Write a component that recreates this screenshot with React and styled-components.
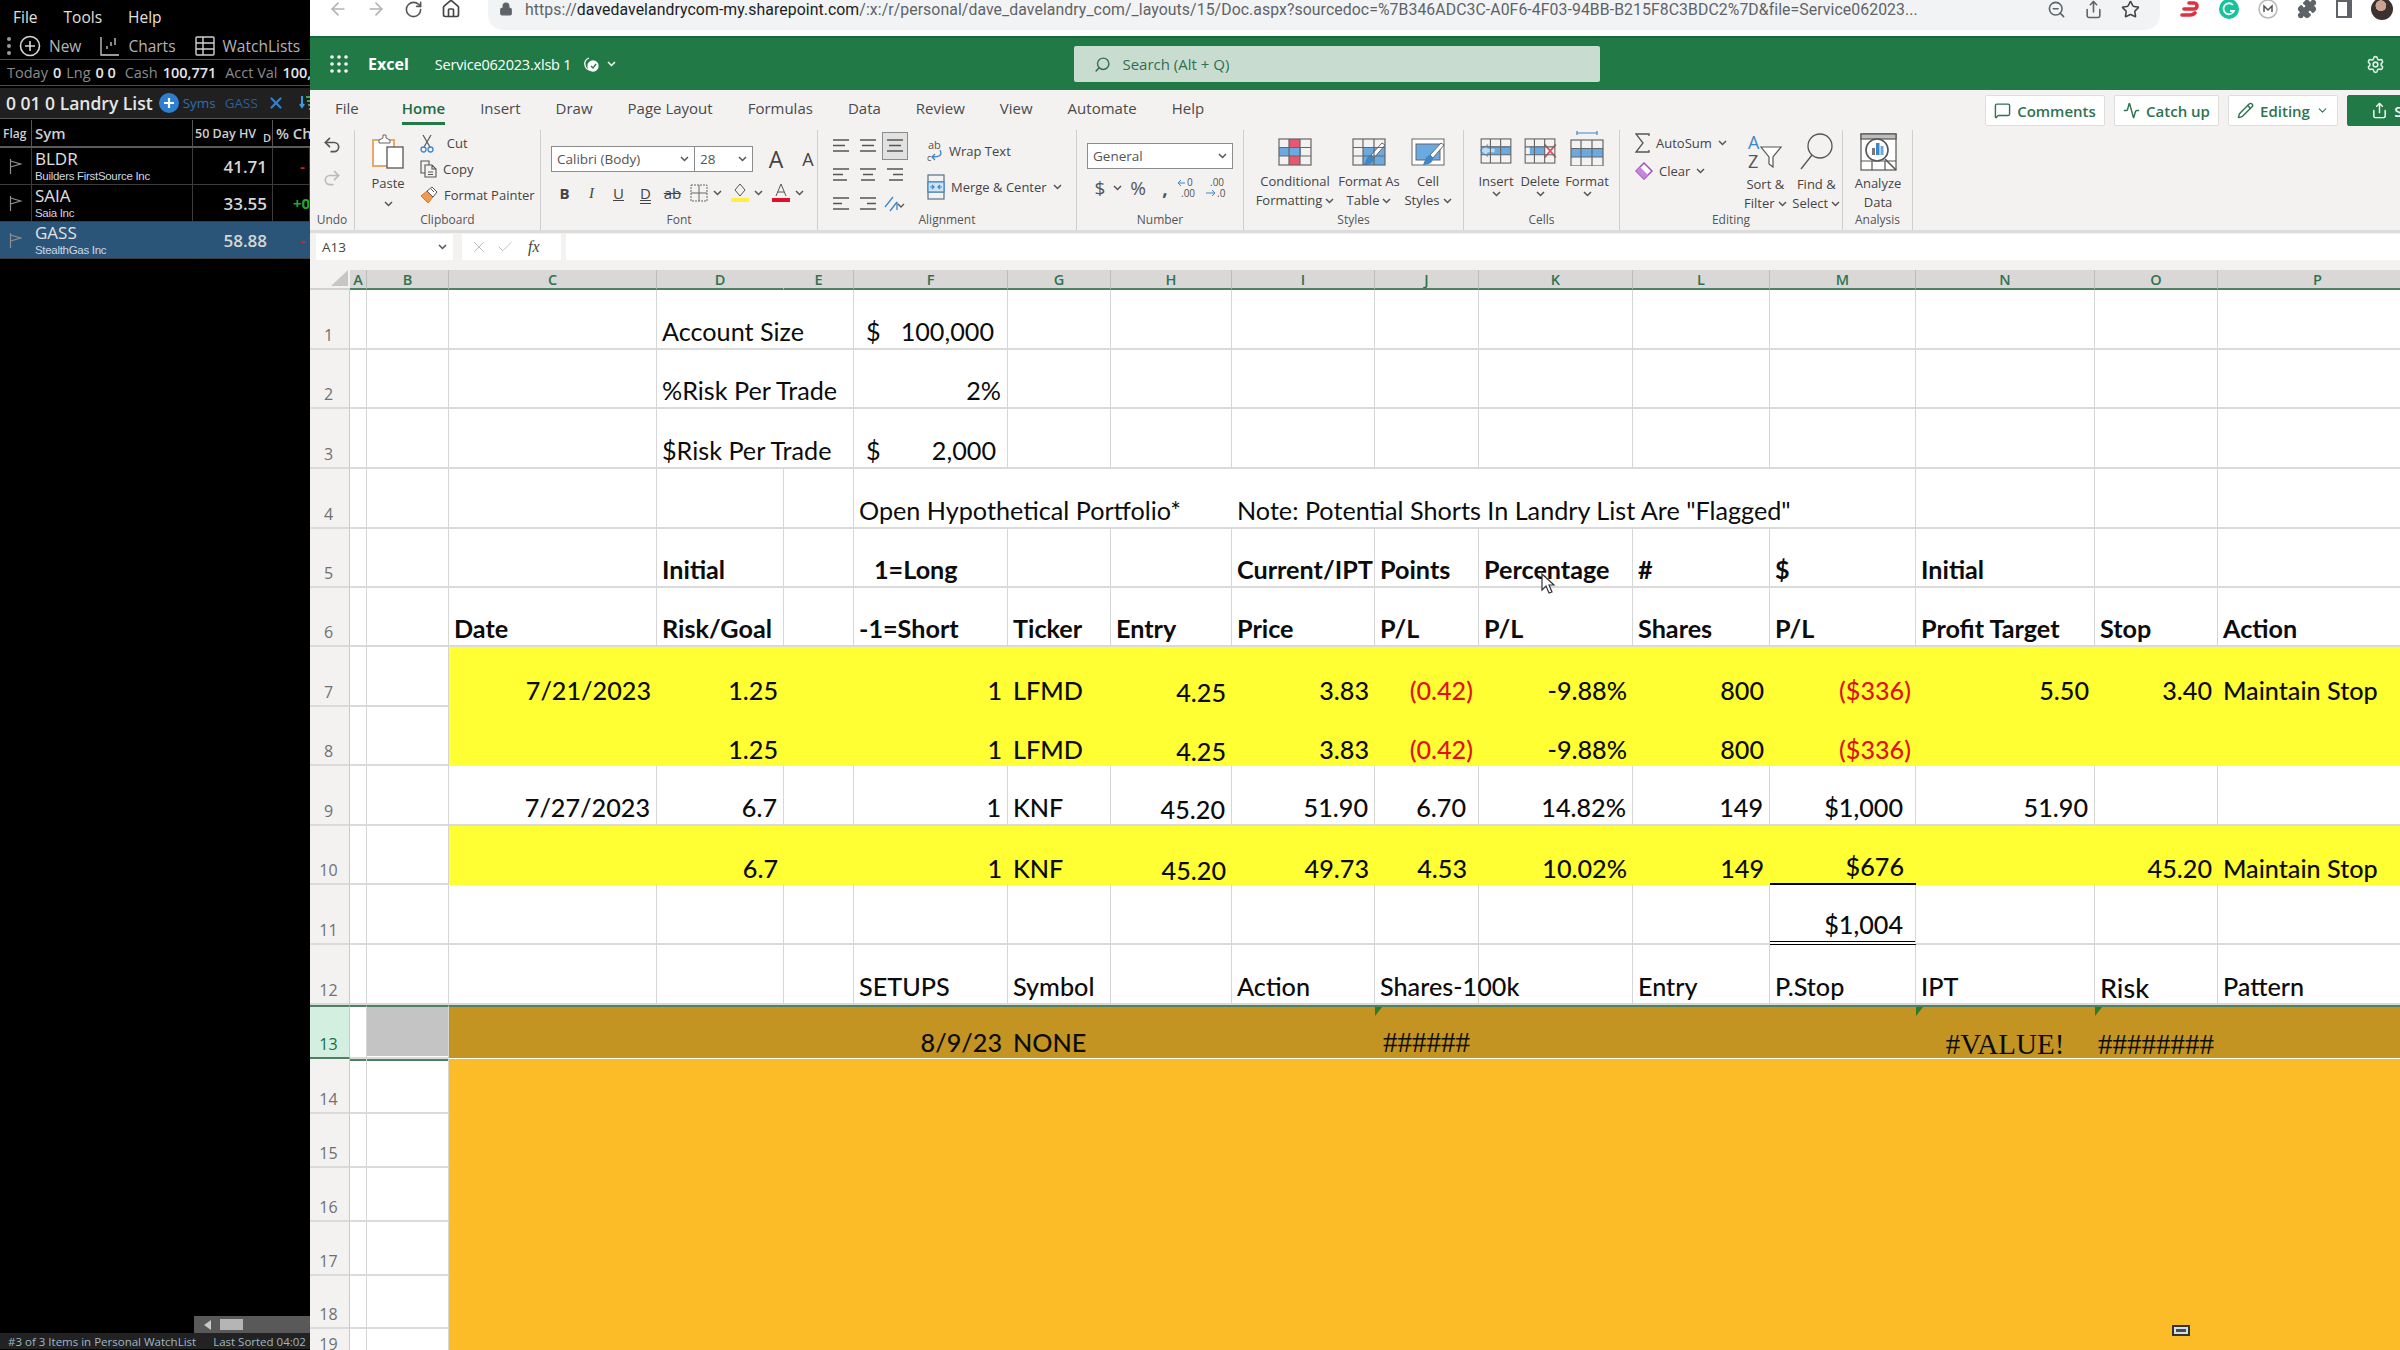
import React from "react";
import styled, { createGlobalStyle } from "styled-components";
import {
  ArrowLeft, ArrowRight, RotateCw, Home, Lock, ZoomOut, Share, Star, Puzzle, Settings,
  Search, MessageSquare, Activity, Pencil, ChevronDown, Undo2, Redo2, X, Check, Plus,
} from "lucide-react";

const UI = '"Open Sans", "Noto Sans", sans-serif';
const SHEET = 'Lato, "Open Sans", sans-serif';
const GREEN = "#217a46";

const Global = createGlobalStyle`
  html, body { margin: 0; padding: 0; width: 2400px; height: 1350px; overflow: hidden; background: #000; }
  * { box-sizing: border-box; }
  svg { display: block; flex: none; }
`;

const Page = styled.div`
  display: flex;
  width: 2400px;
  height: 1350px;
  overflow: hidden;
  position: relative;
  font-family: ${UI};
`;

/* ---------- trading panel ---------- */
const Side = styled.aside`
  width: 310px;
  flex: none;
  background: #000;
  color: #d8d8d8;
  display: flex;
  flex-direction: column;
  overflow: hidden;
  white-space: nowrap;
`;
const MenuBar = styled.div`
  height: 33px;
  display: flex;
  align-items: center;
  gap: 26px;
  padding-left: 13px;
  font-size: 15.5px;
  color: #e2e2d8;
`;
const ToolBar = styled.div`
  height: 27px;
  display: flex;
  align-items: center;
  padding-left: 6px;
  font-size: 15.5px;
  color: #b4b4b4;
  border-bottom: 1px solid #4c4c4c;
`;
const ToolLabel = styled.span`
  margin: 0 ${(p) => p.$right ?? 10}px 0 ${(p) => p.$left ?? 8}px;
`;
const ToolSep = styled.i`
  width: 1px;
  height: 16px;
  background: #888;
  margin-right: 9px;
`;
const Balance = styled.div`
  height: 26px;
  display: flex;
  align-items: center;
  padding-left: 7px;
  gap: 5px;
  font-size: 14.5px;
  color: #8b8b8b;
  border-bottom: 1px solid #4c4c4c;
  b { color: #e6e6e6; font-weight: 600; }
`;
const ListTitle = styled.div`
  height: 31px;
  margin: 2px 0 1px;
  padding-left: 6px;
  display: flex;
  align-items: center;
  background: #202020;
  border-bottom: 1px solid #555;
  font-size: 17.5px;
  font-weight: 600;
  color: #e6e6e6;
`;
const BlueText = styled.span`
  font-size: 13.5px;
  font-weight: 400;
  color: ${(p) => p.$c || "#2f6fb0"};
  margin-left: ${(p) => p.$m || 0}px;
`;
const WatchGrid = styled.div`
  display: grid;
  grid-template-columns: 32px 161px 80px 37px;
  grid-template-rows: 28px 37px 37px 37px;
`;
const HeadCell = styled.div`
  display: flex;
  align-items: center;
  padding-left: ${(p) => p.$pad ?? 3}px;
  font-size: ${(p) => p.$size || 14}px;
  font-weight: 600;
  color: #cfcfcf;
  border-right: 1px solid #555;
  border-bottom: 2px solid #5a5a5a;
  overflow: hidden;
  sub { font-size: 11px; margin: 8px 0 0 7px; }
`;
const WatchCell = styled.div`
  background: ${(p) => (p.$active ? "#2b5578" : "#000")};
  border-right: 1px solid ${(p) => (p.$active ? "#2b5578" : "#3c3c3c")};
  border-bottom: 1px solid #3c3c3c;
  display: flex;
  align-items: center;
  justify-content: ${(p) => p.$justify || "flex-start"};
  overflow: hidden;
`;
const SymBox = styled.div`
  padding-left: 3px;
  line-height: 1;
  span { display: block; font-size: 17px; color: #e2e2e2; }
  small { display: block; margin-top: 3px; font: 11.5px "Liberation Sans", sans-serif; letter-spacing: -0.3px; color: #cbd8e4; }
`;
const Num = styled.span`
  font-size: 17px;
  font-weight: 600;
  color: #d6d6d6;
  padding-right: 5px;
`;
const Change = styled.span`
  font-size: 15px;
  font-weight: 700;
  color: ${(p) => p.$c};
  margin-left: ${(p) => p.$m}px;
`;
const SideFill = styled.div`
  flex: 1;
`;
const HScroll = styled.div`
  height: 17px;
  margin-left: 194px;
  background: #595959;
  display: flex;
  align-items: center;
  padding-left: 10px;
  gap: 9px;
`;
const ScrollArrow = styled.i`
  border: 5px solid transparent;
  border-right: 7px solid #c8c8c8;
  border-left: 0;
`;
const ScrollThumb = styled.i`
  width: 23px;
  height: 11px;
  background: #b5b5b5;
`;
const StatusBar = styled.div`
  height: 16px;
  margin-bottom: 1px;
  background: #222;
  display: flex;
  align-items: center;
  padding-left: 8px;
  gap: 17px;
  font-size: 11.5px;
  color: #9fb6c4;
`;

/* ---------- browser chrome ---------- */
const Main = styled.main`
  flex: 1;
  min-width: 0;
  display: flex;
  flex-direction: column;
  background: #fff;
`;
const BrowserBar = styled.div`
  height: 36px;
  flex: none;
  display: flex;
  background: #fff;
  padding-left: 18px;
  color: #5f6368;
`;
const NavIcons = styled.div`
  height: 18px;
  width: 160px;
  display: flex;
  align-items: center;
  gap: 18px;
`;
const Omnibox = styled.div`
  width: 1672px;
  height: 30px;
  padding: 0 10px 12px 11px;
  border-radius: 0 0 15px 15px;
  background: #f1f3f4;
  display: flex;
  align-items: center;
  gap: 12px;
`;
const Url = styled.div`
  flex: 1;
  width: 0;
  font: 15.8px Roboto, sans-serif;
  color: #5f6368;
  white-space: nowrap;
  overflow: hidden;
  letter-spacing: 0.08px;
  b { font-weight: 400; color: #202124; }
`;
const OmniIcons = styled.div`
  display: flex;
  align-items: center;
  gap: 18px;
  padding-right: 10px;
`;
const ExtIcons = styled.div`
  height: 18px;
  display: flex;
  align-items: center;
  gap: 19px;
  padding-left: 20px;
`;
const Avatar = styled.i`
  width: 22px;
  height: 22px;
  border-radius: 50%;
  background: radial-gradient(circle at 45% 35%, #c9a38e 0 28%, #3b3230 30%);
`;

/* ---------- excel title bar ---------- */
const TitleBar = styled.header`
  height: 54px;
  flex: none;
  background: ${GREEN};
  border-top: 2px solid #156a3a;
  color: #fff;
  display: flex;
  align-items: center;
  padding-left: 20px;
`;
const AppName = styled.strong`
  margin: 0 26px 0 20px;
  font-size: 16px;
`;
const FileName = styled.span`
  font-size: 14.5px;
  letter-spacing: -0.2px;
  margin-right: 12px;
`;
const SearchBox = styled.div`
  width: 526px;
  height: 36px;
  margin-left: 458px;
  background: #c8ddd0;
  border-radius: 2px;
  display: flex;
  align-items: center;
  gap: 11px;
  padding-left: 20px;
  color: #2f6f50;
  font-size: 15px;
`;
const TitleEnd = styled.div`
  flex: 1;
  display: flex;
  justify-content: flex-end;
  padding-right: 15px;
`;

/* ---------- ribbon ---------- */
const Ribbon = styled.section`
  height: 143px;
  flex: none;
  background: #f3f2f1;
  color: #444;
  border-bottom: 3px solid #dcdcdc;
  font-size: 13px;
  white-space: nowrap;
`;
const TabRow = styled.nav`
  height: 40px;
  display: flex;
  align-items: flex-start;
  padding: 5px 0 0 25px;
  gap: 35px;
  font-size: 15px;
  color: #4a4a4a;
`;
const Tab = styled.span`
  height: 30px;
  line-height: 26px;
  margin-right: ${(p) => p.$gap || 0}px;
  color: ${(p) => (p.$on ? "#1e6b42" : "inherit")};
  font-weight: ${(p) => (p.$on ? 600 : 400)};
  border-bottom: ${(p) => (p.$on ? `3px solid ${GREEN}` : "0")};
`;
const TabActions = styled.div`
  margin-left: auto;
  display: flex;
  gap: 9px;
  margin-right: -60px;
`;
const ActionBtn = styled.span`
  width: ${(p) => p.$w}px;
  height: 31px;
  display: flex;
  align-items: center;
  justify-content: center;
  gap: 6px;
  font-size: 15px;
  font-weight: 600;
  border-radius: 2px;
  border: 1px solid ${(p) => (p.$solid ? GREEN : "#dedede")};
  background: ${(p) => (p.$solid ? GREEN : "#fff")};
  color: ${(p) => (p.$solid ? "#fff" : "#2e7350")};
`;
const Groups = styled.div`
  display: flex;
  height: 100px;
`;
const Group = styled.div`
  width: ${(p) => p.$w}px;
  flex: none;
  display: flex;
  flex-direction: column;
  border-right: 1px solid #cfcfcf;
`;
const GroupBody = styled.div`
  flex: 1;
  display: flex;
  padding-left: ${(p) => p.$pad || 0}px;
  min-height: 0;
`;
const GroupName = styled.div`
  height: 19px;
  text-align: center;
  font-size: 12px;
  color: #555;
`;
const BigBtn = styled.div`
  width: ${(p) => p.$w}px;
  flex: none;
  display: flex;
  flex-direction: column;
  align-items: center;
  padding-top: ${(p) => p.$top ?? 8}px;
  line-height: 19px;
  svg + span { margin-top: ${(p) => p.$gap ?? 6}px; }
`;
const CaretLine = styled.span`
  display: flex;
  align-items: center;
  gap: 3px;
`;
const SmallStack = styled.div`
  display: flex;
  flex-direction: column;
  gap: 6px;
  padding: ${(p) => p.$top ?? 3}px 0 0 ${(p) => p.$left ?? 0}px;
`;
const SmallBtn = styled.div`
  display: flex;
  align-items: center;
  height: 20px;
  gap: 6px;
`;
const ComboRow = styled.div`
  display: flex;
  align-items: center;
  gap: ${(p) => p.$gap ?? 0}px;
`;
const Combo = styled.div`
  height: 26px;
  background: #fff;
  border: 1px solid #8c8c8c;
  display: flex;
  align-items: center;
  font-size: 13.5px;
  color: #555;
`;
const ComboPart = styled.div`
  width: ${(p) => p.$w}px;
  height: 100%;
  display: flex;
  align-items: center;
  justify-content: space-between;
  padding: 0 5px;
  border-left: ${(p) => (p.$split ? "1px solid #8c8c8c" : "0")};
`;
const StackCol = styled.div`
  display: flex;
  flex-direction: column;
  padding: ${(p) => p.$top}px 0 0 ${(p) => p.$left}px;
  gap: ${(p) => p.$gap}px;
`;
const FontBtn = styled.span`
  width: ${(p) => p.$w || 26}px;
  display: flex;
  justify-content: center;
  align-items: center;
  font-size: 15px;
  font-family: "Liberation Serif", serif;
  color: #444;
`;
const AlignGrid = styled.div`
  display: grid;
  grid-template-columns: repeat(3, 27px);
  grid-template-rows: 28px 29px 29px;
  margin: 2px 0 0 9px;
  justify-items: center;
  align-items: center;
`;
const AlignCell = styled.div`
  width: 26px;
  height: 28px;
  display: flex;
  align-items: center;
  justify-content: center;
  background: ${(p) => (p.$on ? "#e1e1e1" : "transparent")};
  border: 1px solid ${(p) => (p.$on ? "#8c8c8c" : "transparent")};
`;
const NumGlyph = styled.span`
  font-size: 19px;
  color: #555;
  width: ${(p) => p.$w}px;
  text-align: center;
`;

/* ---------- formula bar ---------- */
const FormulaBar = styled.div`
  height: 37px;
  flex: none;
  display: flex;
  gap: 5px;
  background: #f3f2f1;
  padding: 1px 0 10px 6px;
`;
const NameBox = styled.div`
  width: 137px;
  background: #fff;
  display: flex;
  align-items: center;
  justify-content: space-between;
  padding: 0 6px;
  font-size: 13.5px;
  color: #444;
  margin-right: 4px;
`;
const FxBox = styled.div`
  width: 99px;
  background: #fff;
  display: flex;
  align-items: center;
  gap: 8px;
  padding-left: 8px;
  color: #bdbdbd;
  i { font: italic 16px "Liberation Serif", serif; color: #444; margin-left: 6px; }
`;
const FormulaInput = styled.div`
  flex: 1;
  background: #fff;
`;

/* ---------- sheet ---------- */
const Sheet = styled.div`
  flex: 1;
  min-height: 0;
  overflow: hidden;
  display: grid;
  grid-template-columns: 40px 17px 82px 208px 127px 70px 154px 103px 121px 143px 104px 154px 137px 146px 179px 123px 200px;
  grid-template-rows: 20px 60px 59px 60px 60px 59px 59px 60px 59px 60px 59px 60px 60px 54px 55px 54px 54px 54px 53px 30px;
  background: #fff;
  font-family: ${SHEET};
`;
const Corner = styled.div`
  background: #f3f2f1;
  border-bottom: 2px solid #d0d0d0;
  display: flex;
  align-items: flex-end;
  justify-content: flex-end;
  padding: 0 2px 2px 0;
`;
const ColHead = styled.div`
  background: #d9d8d7;
  border-right: 1px solid ${(p) => (p.$merge ? "transparent" : "#bcbcbc")};
  border-bottom: 2px solid #4e8263;
  display: flex;
  align-items: center;
  justify-content: ${(p) => (p.$shift ? "flex-end" : "center")};
  padding-right: ${(p) => (p.$shift ? 5 : 0)}px;
  font: 600 14.5px ${UI};
  color: #2e7350;
`;
const RowHead = styled.div`
  background: ${(p) => (p.$on ? "#d2efe0" : "#f3f2f1")};
  border-right: 1px solid #c9c9c9;
  border-bottom: 2px solid ${(p) => (p.$on ? "#4e8263" : "#dadada")};
  border-top: ${(p) => (p.$on ? "2px solid #4e8263" : "0")};
  color: ${(p) => (p.$on ? "#1e6b42" : "#707070")};
  font: 400 16px ${UI};
  display: flex;
  align-items: flex-end;
  justify-content: center;
  padding-bottom: 2px;
  padding-right: 2px;
`;
const justify = { right: "flex-end", center: "center", left: "flex-start", between: "space-between" };
const Cell = styled.div`
  position: relative;
  min-width: 0;
  display: flex;
  align-items: flex-end;
  justify-content: ${(p) => justify[p.$align || "left"]};
  white-space: nowrap;
  padding: 0 ${(p) => p.$padR ?? 6}px ${(p) => p.$drop ?? 2}px ${(p) => p.$padL ?? 5}px;
  font-family: ${(p) => (p.$serif ? '"Liberation Serif", serif' : "inherit")};
  font-size: ${(p) => p.$size || 25.2}px;
  line-height: 30px;
  font-weight: ${(p) => p.$weight || 400};
  color: ${(p) => (p.$red ? "#e01313" : "#0c0c0c")};
  background: ${(p) => p.$fill || "transparent"};
  border-right: ${(p) => (p.$noLine ? "0" : "1px solid #d6d6d6")};
  border-bottom: ${(p) => p.$rule || (p.$noLine ? "0" : "2px solid #dadada")};
  border-top: ${(p) => (p.$selected ? "2px solid #4e8263" : "0")};
  box-shadow: ${(p) => (p.$selected ? "inset 0 -1px 0 #fff, 0 2px 0 #4e8263" : "none")};
`;
const Tick = styled.i`
  position: absolute;
  top: 0;
  left: 0;
  border-style: solid;
  border-width: 9px 7px 0 0;
  border-color: #2b7a2f transparent transparent transparent;
`;
const Cursor = styled.svg`
  position: absolute;
  left: 1541px;
  top: 573px;
`;
const PageBadge = styled.div`
  position: absolute;
  left: 2172px;
  top: 1325px;
  width: 18px;
  height: 11px;
  background: #4a4a4a;
  border: 2px solid #333;
  box-shadow: inset 0 0 0 2px #cfe0ea;
`;

/* ---------- drawn icons ---------- */
const Caret = ({ c = "#555" }) => (
  <svg width="9" height="6" viewBox="0 0 9 6"><path d="M1 1l3.5 3.5L8 1" fill="none" stroke={c} strokeWidth="1.5" /></svg>
);
const Lines = ({ w = [16, 16, 16], a = "l" }) => (
  <svg width="18" height="16" viewBox="0 0 18 16" stroke="#555" strokeWidth="1.5">
    {w.map((n, i) => {
      const x = a === "l" ? 1 : a === "c" ? 9 - n / 2 : 17 - n;
      return <path key={i} d={`M${x} ${2 + i * 5.5}h${n}`} />;
    })}
  </svg>
);
const GridBase = ({ children, w = 34, h = 28 }) => (
  <svg width={w} height={h} viewBox="0 0 34 28">
    {children}
    <g fill="none" stroke="#666" strokeWidth="1.2">
      <rect x="1" y="1" width="32" height="26" />
      <path d="M1 9.5h32M1 18h32M11 1v26M22 1v26" />
    </g>
  </svg>
);
const Brush = () => (
  <g>
    <path d="M33 7L22 20l-3-3L30 5z" fill="#fff" stroke="#666" />
    <path d="M19 17c-4 1-5 5-7 10 5 0 10-2 10-7z" fill="#3d87c9" />
  </g>
);
const CondIcon = () => (
  <GridBase>
    <rect x="11" y="1" width="11" height="8" fill="#e8566f" />
    <rect x="1" y="9" width="22" height="9" fill="#6aaae0" />
    <rect x="11" y="18" width="11" height="9" fill="#e8566f" />
  </GridBase>
);
const TableIcon = () => (
  <GridBase><rect x="11" y="9" width="22" height="18" fill="#6aaae0" /><Brush /></GridBase>
);
const CellStyleIcon = () => (
  <svg width="34" height="28" viewBox="0 0 34 28">
    <rect x="1" y="1" width="32" height="26" fill="#fff" stroke="#666" />
    <rect x="5" y="6" width="24" height="16" fill="#6aaae0" stroke="#666" />
    <Brush />
  </svg>
);
const InsertIcon = () => (
  <GridBase w={36} h={26}>
    <rect x="1" y="9" width="32" height="9" fill="#6aaae0" />
    <path d="M0 13.5L8 7v4h8v5H8v4z" fill="#bcdcf5" stroke="#6aaae0" />
  </GridBase>
);
const DeleteIcon = () => (
  <GridBase w={36} h={26}>
    <rect x="6" y="9" width="16" height="9" fill="#6aaae0" />
    <path d="M22 7l12 14M34 7L22 21" stroke="#e04b5d" strokeWidth="2" />
  </GridBase>
);
const FormatIcon = () => (
  <svg width="34" height="36" viewBox="0 0 34 36">
    <path d="M7 3h20M7 1v4M27 1v4" stroke="#3d87c9" strokeWidth="1.2" />
    <g transform="translate(0 9)">
      <rect x="1" y="9" width="32" height="9" fill="#6aaae0" />
      <rect x="1" y="1" width="32" height="26" fill="none" stroke="#666" strokeWidth="1.2" />
      <path d="M1 9.5h32M1 18h32M11 1v26M22 1v26" stroke="#666" strokeWidth="1.2" />
    </g>
  </svg>
);
const PasteIcon = () => (
  <svg width="34" height="36" viewBox="0 0 34 36">
    <path d="M2 6h21v26H2z" fill="#fff" stroke="#e7a868" strokeWidth="2" />
    <path d="M8 6l4-2V1h3v3l4 2v3H8z" fill="#fff" stroke="#666" />
    <rect x="16" y="13" width="16" height="21" fill="#fff" stroke="#555" strokeWidth="1.3" />
  </svg>
);
const CutIcon = () => (
  <svg width="14" height="19" viewBox="0 0 14 19" fill="none">
    <path d="M3 1l7 12M11 1L4 13" stroke="#555" strokeWidth="1.2" />
    <circle cx="3.5" cy="15.5" r="2.5" stroke="#3d87c9" strokeWidth="1.3" />
    <circle cx="10.5" cy="15.5" r="2.5" stroke="#3d87c9" strokeWidth="1.3" />
  </svg>
);
const CopyIcon = () => (
  <svg width="17" height="18" viewBox="0 0 17 18" fill="#f3f2f1" stroke="#555" strokeWidth="1.1">
    <path d="M1 1h8v12H1z" />
    <path d="M5 5h7l4 4v8H5zM12 5v4h4M8 12h5M8 14.5h5" />
  </svg>
);
const PainterIcon = () => (
  <svg width="18" height="18" viewBox="0 0 18 18">
    <path d="M1 10l6-5 6 6-5 6z" fill="#ef9a4d" stroke="#d47a2e" />
    <path d="M7 5l5-4 5 5-4 5z" fill="#fff" stroke="#555" />
    <path d="M11 3l3 3" stroke="#555" />
  </svg>
);
const WrapIcon = () => (
  <svg width="16" height="24" viewBox="0 0 16 24">
    <text x="1" y="10" fontSize="11" fill="#555" fontFamily="Open Sans">ab</text>
    <path d="M13 11c3 6-2 7-7 7M8 15l-3 3 3 3" fill="none" stroke="#3d87c9" strokeWidth="1.3" />
    <text x="0" y="22" fontSize="9" fill="#555" fontFamily="Open Sans">c</text>
  </svg>
);
const MergeIcon = () => (
  <svg width="18" height="26" viewBox="0 0 18 26" fill="none" stroke="#3d87c9" strokeWidth="1.2">
    <rect x="1" y="1" width="16" height="24" stroke="#5a6f85" />
    <path d="M1 8h16M1 18h16" stroke="#5a6f85" />
    <rect x="1" y="8" width="16" height="10" fill="#cfe3f5" />
    <path d="M3 13h4M5 11l2 2-2 2M15 13h-4M13 11l-2 2 2 2" />
  </svg>
);
const Sigma = () => (
  <svg width="15" height="20" viewBox="0 0 15 20"><path d="M14 3V1H1l7 9-7 9h13v-2" fill="none" stroke="#555" strokeWidth="1.3" /></svg>
);
const Eraser = () => (
  <svg width="18" height="18" viewBox="0 0 18 18"><path d="M9 1l8 8-8 8-8-8z" fill="#fff" stroke="#a14bbd" strokeWidth="1.5" /><path d="M5 5l8 8-4 4-8-8z" fill="#c586dc" /></svg>
);
const SortIcon = () => (
  <svg width="36" height="38" viewBox="0 0 36 38">
    <text x="1" y="16" fontSize="18" fill="#3d87c9" fontFamily="Open Sans">A</text>
    <text x="1" y="35" fontSize="18" fill="#555" fontFamily="Open Sans">Z</text>
    <path d="M14 14h20l-8 10v10l-4-3v-7z" fill="#fff" stroke="#555" strokeWidth="1.2" />
  </svg>
);
const FindIcon = () => (
  <svg width="36" height="38" viewBox="0 0 36 38" fill="none" stroke="#555" strokeWidth="1.3">
    <circle cx="22" cy="13" r="12" /><path d="M14 22L3 36" />
  </svg>
);
const AnalyzeIcon = () => (
  <svg width="37" height="38" viewBox="0 0 37 38" fill="none" stroke="#555" strokeWidth="1.2">
    <rect x="1" y="1" width="35" height="36" fill="#fff" />
    <rect x="1" y="1" width="35" height="5" fill="#bdbdbd" />
    <path d="M1 28h35M12 28v9M25 28v9" />
    <circle cx="17" cy="17" r="11" fill="#fff" strokeWidth="1.6" />
    <path d="M25 26l11 11" strokeWidth="1.6" />
    <rect x="12" y="15" width="3" height="7" fill="#777" stroke="none" />
    <rect x="16" y="10" width="3.5" height="12" fill="#3d87c9" stroke="none" />
    <rect x="20.5" y="13" width="3" height="9" fill="#6aaae0" stroke="none" />
  </svg>
);
const CloudCheck = () => (
  <svg width="16" height="17" viewBox="0 0 16 17" fill="none" stroke="#fff" strokeWidth="1.3">
    <path d="M6 2C3 3 1 6 2 9c0 3 3 5 5 5" /><circle cx="10" cy="10" r="5" fill="#fff" />
    <path d="M8 10l2 2 3-4" stroke={GREEN} />
  </svg>
);
const Waffle = () => (
  <svg width="18" height="18" viewBox="0 0 18 18" fill="#fff">
    {[2, 9, 16].map((y) => [2, 9, 16].map((x) => <circle key={`${x}${y}`} cx={x} cy={y} r="1.8" />))}
  </svg>
);
const FlagIcon = ({ c = "#8f8f8f" }) => (
  <svg width="13" height="15" viewBox="0 0 13 15" fill="none" stroke={c} strokeWidth="1.2">
    <path d="M1.5 0v15M1.5 2l10 3-10 3" />
  </svg>
);
const GripDots = () => (
  <svg width="6" height="20" viewBox="0 0 6 20" fill="#9a9a9a"><circle cx="3" cy="3" r="2" /><circle cx="3" cy="10" r="2" /><circle cx="3" cy="17" r="2" /></svg>
);
const ChartsGlyph = () => (
  <svg width="20" height="20" viewBox="0 0 20 20" fill="none" stroke="#d0d0d0" strokeWidth="1.3">
    <path d="M1 1v18h18M7 13v-3M11 10V6M15 9V2" />
  </svg>
);
const ListGlyph = () => (
  <svg width="20" height="20" viewBox="0 0 20 20" fill="none" stroke="#d0d0d0" strokeWidth="1.4">
    <rect x="1" y="1" width="18" height="18" rx="1" /><path d="M1 7h18M1 13h18M8 1v18" />
  </svg>
);
const RedPill = () => (
  <svg width="20" height="18" viewBox="0 0 20 18" fill="none" stroke="#e0303f" strokeWidth="3.6" strokeLinecap="round">
    <path d="M4 9h10c4 0 4-6 0-6h-5M2 15h8c3 0 4-1 5-2" />
  </svg>
);
const GrammarlyDot = () => (
  <svg width="20" height="20" viewBox="0 0 20 20">
    <circle cx="10" cy="10" r="10" fill="#15c39a" />
    <path d="M14 6a5.5 5.5 0 1 0 1 6h-4" fill="none" stroke="#fff" strokeWidth="1.8" />
  </svg>
);
const GrayBadge = () => (
  <svg width="20" height="20" viewBox="0 0 20 20">
    <circle cx="10" cy="10" r="9" fill="#fff" stroke="#b8b8b8" strokeWidth="1.5" />
    <path d="M6 13V7l4 4 4-4v6" fill="none" stroke="#555" strokeWidth="1.5" />
  </svg>
);
const PanelGlyph = () => (
  <svg width="16" height="18" viewBox="0 0 16 18">
    <rect x="1" y="1" width="14" height="16" fill="#fff" stroke="#5f6368" strokeWidth="2" />
    <rect x="11" y="1" width="4" height="16" fill="#5f6368" />
  </svg>
);
const HeatGlyph = () => (
  <svg width="14" height="17" viewBox="0 0 14 17">
    <path d="M3 1v10M1 9l2 3 2-3" stroke="#3d9be0" strokeWidth="2" fill="none" />
    <path d="M7 2h6M8 6h5M9 10h4M10 14h3" stroke="#46a24a" strokeWidth="2" />
  </svg>
);
const MenuGlyph = () => (
  <svg width="14" height="14" viewBox="0 0 14 14" stroke="#bbb" strokeWidth="2"><path d="M0 2h14M0 7h14M0 12h14" /></svg>
);

/* ---------- sheet data ---------- */
const COLS = ["A", "B", "C", "D", "E", "F", "G", "H", "I", "J", "K", "L", "M", "N", "O", "P"];
const FILLED = COLS.slice(2);
const YELLOW = "#ffff33";
const DARK = "#c39421";
const ORANGE = "#fbbc27";
const YLW = { fill: YELLOW };

const L = (t, o) => ({ t, ...o });
const R = (t, o) => ({ t, $align: "right", ...o });
const Med = { $weight: 500 };
const Bold = { $weight: 700 };
const Wide = { $padR: 12 };
const Neg = { $red: true, $weight: 500 };

const tradeA = (date) => ({
  C: R(date, Med),
  D: R("1.25", Med),
  F: R("1", Med),
  G: L("LFMD", Med),
  H: R("4.25", { ...Med, $drop: 0 }),
  I: R("3.83", Med),
  J: R("(0.42)", Neg),
  K: R("-9.88%", Med),
  L: R("800", Med),
  M: R("($336)", { ...Neg, $padR: 5 }),
});

const ROWS = [
  { cells: { D: L("Account Size"), F: { parts: ["$", "100,000"], $align: "between", $padL: 12, $padR: 13 } }, open: ["D"] },
  { cells: { D: L("%Risk Per Trade"), F: R("2%") }, open: ["D"] },
  { cells: { D: L("$Risk Per Trade"), F: { parts: ["$", "2,000"], $align: "between", $padL: 12, $padR: 11 } }, open: ["D"] },
  { cells: { F: L("Open Hypothetical Portfolio*"), I: L('Note: Potential Shorts In Landry List Are "Flagged"') }, open: ["F", "G", "H", "I", "J", "K", "L"] },
  { cells: { D: L("Initial", Bold), F: L("1=Long", { ...Bold, $padL: 20 }), I: L("Current/IPT", Bold), J: L("Points", Bold), K: L("Percentage", Bold), L: L("#", Bold), M: L("$", Bold), N: L("Initial", Bold) } },
  { cells: { C: L("Date", Bold), D: L("Risk/Goal", Bold), F: L("-1=Short", Bold), G: L("Ticker", Bold), H: L("Entry", Bold), I: L("Price", Bold), J: L("P/L", Bold), K: L("P/L", Bold), L: L("Shares", Bold), M: L("P/L", Bold), N: L("Profit Target", Bold), O: L("Stop", Bold), P: L("Action", Bold) } },
  { ...YLW, cells: { ...tradeA("7/21/2023"), N: R("5.50", Med), O: R("3.40", Med), P: L("Maintain Stop", Med) } },
  { ...YLW, cells: tradeA("") },
  { cells: { C: R("7/27/2023", Med), D: R("6.7", Med), F: R("1", Med), G: L("KNF", Med), H: R("45.20", { ...Med, $drop: 0 }), I: R("51.90", Med), J: R("6.70", { ...Med, ...Wide }), K: R("14.82%", Med), L: R("149", Med), M: R("$1,000", { ...Med, ...Wide }), N: R("51.90", Med) } },
  { ...YLW, cells: { D: R("6.7", Med), F: R("1", Med), G: L("KNF", Med), H: R("45.20", { ...Med, $drop: 0 }), I: R("49.73", Med), J: R("4.53", { ...Med, ...Wide }), K: R("10.02%", Med), L: R("149", Med), M: R("$676", { ...Med, ...Wide, $rule: "2px solid #000" }), O: R("45.20", Med), P: L("Maintain Stop", Med) } },
  { cells: { M: R("$1,004", { ...Med, ...Wide, $rule: "4px double #000" }) } },
  { cells: { F: L("SETUPS", Med), G: L("Symbol", Med), I: L("Action", Med), J: L("Shares-100k", Med), K: L("", Med), L: L("Entry", Med), M: L("P.Stop", Med), N: L("IPT", Med), O: L("Risk", { ...Med, $size: 27, $drop: 0 }), P: L("Pattern", Med) } },
  {
    fill: DARK,
    selected: true,
    cells: {
      F: R("8/9/23", Med),
      G: L("NONE", Med),
      J: L("######", { $serif: true, $size: 29, $padL: 8, $tick: true }),
      N: { t: "#VALUE!", $align: "center", $serif: true, $size: 29, $tick: true, $drop: 0 },
      O: L("########", { $serif: true, $size: 29, $padL: 3, $tick: true, $drop: 0 }),
    },
  },
  { fill: ORANGE, cells: {} },
  { fill: ORANGE, cells: {} },
  { fill: ORANGE, cells: {} },
  { fill: ORANGE, cells: {} },
  { fill: ORANGE, cells: {} },
  { fill: ORANGE, cells: {} },
];

const SheetRow = ({ row, n }) => (
  <>
    <RowHead $on={row.selected}>{n}</RowHead>
    {COLS.map((col) => {
      const { t, parts, $tick, ...props } = row.cells[col] || {};
      const filled = row.fill && FILLED.includes(col);
      const gray = row.selected && col === "B";
      const open = row.open && row.open.includes(col);
      return (
        <Cell
          key={col}
          {...props}
          $fill={filled ? row.fill : gray ? "#c4c4c4" : undefined}
          $noLine={filled || open}
          $selected={row.selected}
          style={open ? { borderBottom: "2px solid #dadada" } : undefined}
        >
          {$tick && <Tick />}
          {parts ? parts.map((p) => <span key={p}>{p}</span>) : t}
        </Cell>
      );
    })}
  </>
);

/* ---------- page sections ---------- */
const Watchlist = () => (
  <Side>
    <MenuBar><span>File</span><span>Tools</span><span>Help</span></MenuBar>
    <ToolBar>
      <GripDots />
      <svg width="22" height="22" viewBox="0 0 22 22" fill="none" stroke="#d8d8d8" strokeWidth="1.6" style={{ marginLeft: 7 }}>
        <circle cx="11" cy="11" r="9.5" /><path d="M11 6v10M6 11h10" />
      </svg>
      <ToolLabel>New</ToolLabel><ToolSep />
      <ChartsGlyph /><ToolLabel>Charts</ToolLabel><ToolSep />
      <ListGlyph /><ToolLabel>WatchLists</ToolLabel><ToolSep />
    </ToolBar>
    <Balance>
      <span>Today</span><b>0</b><span>Lng</span><b>0 0</b><span>&nbsp;Cash</span><b>100,771</b><span>&nbsp;Acct Val</span><b>100,771</b>
    </Balance>
    <ListTitle>
      0 01 0 Landry List
      <svg width="20" height="20" viewBox="0 0 20 20" style={{ margin: "0 4px 0 6px" }}>
        <circle cx="10" cy="10" r="10" fill="#2f7fd0" /><path d="M10 5v10M5 10h10" stroke="#fff" strokeWidth="2.2" />
      </svg>
      <BlueText $c="#2f6fb0">Syms</BlueText>
      <BlueText $c="#2a5f9a" $m={9}>GASS</BlueText>
      <X size={18} color="#2f7fd0" strokeWidth={3} style={{ margin: "0 14px 0 9px" }} />
      <HeatGlyph />
      <span style={{ width: 8 }} />
      <MenuGlyph />
    </ListTitle>
    <WatchGrid>
      <HeadCell $size={12}>Flag</HeadCell>
      <HeadCell $size={15}>Sym</HeadCell>
      <HeadCell $size={12.5} $pad={2}>50 Day HV<sub>D</sub></HeadCell>
      <HeadCell $size={15} style={{ borderRight: 0 }}>%&nbsp;Ch</HeadCell>
      {[
        ["BLDR", "Builders FirstSource Inc", "41.71", "-", "#c02020", 32],
        ["SAIA", "Saia Inc", "33.55", "+0", "#2aa52a", 25],
        ["GASS", "StealthGas Inc", "58.88", "-", "#c03030", 32],
      ].map(([sym, name, hv, chg, c, m], i) => (
        <React.Fragment key={sym}>
          <WatchCell $active={i === 2} $justify="center"><FlagIcon /></WatchCell>
          <WatchCell $active={i === 2}><SymBox><span>{sym}</span><small>{name}</small></SymBox></WatchCell>
          <WatchCell $active={i === 2} $justify="flex-end"><Num>{hv}</Num></WatchCell>
          <WatchCell $active={i === 2}><Change $c={c} $m={m - 5 > 0 ? m - 5 : 0}>{chg}</Change></WatchCell>
        </React.Fragment>
      ))}
    </WatchGrid>
    <SideFill />
    <HScroll><ScrollArrow /><ScrollThumb /></HScroll>
    <StatusBar><span>#3 of 3 Items in Personal WatchList</span><span>Last Sorted 04:02</span></StatusBar>
  </Side>
);

const Browser = () => (
  <BrowserBar>
    <NavIcons>
      <ArrowLeft size={20} color="#b0b3b6" />
      <ArrowRight size={20} color="#b0b3b6" />
      <RotateCw size={19} color="#555" />
      <Home size={20} color="#444" />
    </NavIcons>
    <Omnibox>
      <Lock size={14} color="#5f6368" fill="#5f6368" />
      <Url>https://<b>davedavelandrycom-my.sharepoint.com</b>/:x:/r/personal/dave_davelandry_com/_layouts/15/Doc.aspx?sourcedoc=%7B346ADC3C-A0F6-4F03-94BB-B215F8C3BDC2%7D&amp;file=Service062023...</Url>
      <OmniIcons>
        <ZoomOut size={19} color="#5f6368" />
        <Share size={19} color="#5f6368" />
        <Star size={19} color="#444" />
      </OmniIcons>
    </Omnibox>
    <ExtIcons>
      <RedPill />
      <GrammarlyDot />
      <GrayBadge />
      <Puzzle size={20} color="#5f6368" fill="#5f6368" />
      <PanelGlyph />
      <Avatar />
    </ExtIcons>
  </BrowserBar>
);

const Title = () => (
  <TitleBar>
    <Waffle />
    <AppName>Excel</AppName>
    <FileName>Service062023.xlsb 1</FileName>
    <CloudCheck />
    <span style={{ width: 8 }} />
    <Caret c="#fff" />
    <SearchBox><Search size={17} style={{ transform: "scaleX(-1)" }} />Search (Alt + Q)</SearchBox>
    <TitleEnd><Settings size={19} color="#d9eee2" /></TitleEnd>
  </TitleBar>
);

const TwoLine = ({ a, b }) => (
  <>
    <span>{a}</span>
    <CaretLine>{b}<Caret /></CaretLine>
  </>
);

const RibbonBar = () => (
  <Ribbon>
    <TabRow>
      <Tab $gap={8}>File</Tab>
      <Tab $on>Home</Tab>
      {["Insert", "Draw", "Page Layout", "Formulas", "Data", "Review", "View", "Automate", "Help"].map((t) => <Tab key={t}>{t}</Tab>)}
      <TabActions>
        <ActionBtn $w={120}><MessageSquare size={17} />Comments</ActionBtn>
        <ActionBtn $w={105}><Activity size={17} />Catch up</ActionBtn>
        <ActionBtn $w={110}><Pencil size={17} />Editing<ChevronDown size={13} /></ActionBtn>
        <ActionBtn $w={113} $solid><Share size={17} />Share</ActionBtn>
      </TabActions>
    </TabRow>
    <Groups>
      <Group $w={45}>
        <GroupBody>
          <StackCol $top={5} $left={12} $gap={13}>
            <Undo2 size={20} color="#555" />
            <Redo2 size={20} color="#bbb" />
          </StackCol>
        </GroupBody>
        <GroupName>Undo</GroupName>
      </Group>
      <Group $w={186}>
        <GroupBody $pad={15}>
          <BigBtn $w={36} $top={4} $gap={4}>
            <PasteIcon />
            <span>Paste</span>
            <div style={{ marginTop: 8 }}><Caret /></div>
          </BigBtn>
          <SmallStack $left={14} $top={3}>
            <SmallBtn><CutIcon /><span>&nbsp;&nbsp;Cut</span></SmallBtn>
            <SmallBtn><CopyIcon /><span>Copy</span></SmallBtn>
            <SmallBtn><PainterIcon /><span>Format Painter</span></SmallBtn>
          </SmallStack>
        </GroupBody>
        <GroupName>Clipboard</GroupName>
      </Group>
      <Group $w={277}>
        <GroupBody $pad={10}>
          <StackCol $top={13} $left={0} $gap={8}>
            <ComboRow $gap={14}>
              <Combo>
                <ComboPart $w={142}>Calibri (Body)<Caret /></ComboPart>
                <ComboPart $w={58} $split>28<Caret /></ComboPart>
              </Combo>
              <FontBtn $w={18} style={{ fontFamily: UI, fontSize: 23 }}>A</FontBtn>
              <FontBtn $w={18} style={{ fontFamily: UI, fontSize: 18 }}>A</FontBtn>
            </ComboRow>
            <ComboRow>
              <FontBtn $w={27} style={{ fontFamily: UI, fontWeight: 700 }}>B</FontBtn>
              <FontBtn $w={27} style={{ fontStyle: "italic" }}>I</FontBtn>
              <FontBtn $w={27} style={{ fontFamily: UI, textDecoration: "underline" }}>U</FontBtn>
              <FontBtn $w={27} style={{ fontFamily: UI, textDecoration: "underline double" }}>D</FontBtn>
              <FontBtn $w={27} style={{ fontFamily: UI, textDecoration: "line-through" }}>ab</FontBtn>
              <svg width="18" height="18" viewBox="0 0 18 18" fill="none" stroke="#666" style={{ marginLeft: 4 }}>
                <rect x="1" y="1" width="16" height="16" strokeDasharray="2 1" /><path d="M9 1v16M1 9h16" />
              </svg>
              <span style={{ width: 5 }} /><Caret /><span style={{ width: 8 }} />
              <svg width="20" height="20" viewBox="0 0 20 20">
                <path d="M10 1l5 6-5 6-5-6z" fill="none" stroke="#555" /><rect x="1" y="15" width="18" height="4" fill="#ffef40" />
              </svg>
              <span style={{ width: 4 }} /><Caret /><span style={{ width: 8 }} />
              <svg width="20" height="20" viewBox="0 0 20 20">
                <path d="M5 13L10 1l5 12M7 9h6" fill="none" stroke="#555" /><rect x="1" y="15" width="18" height="4" fill="#e0102a" />
              </svg>
              <span style={{ width: 4 }} /><Caret />
            </ComboRow>
          </StackCol>
        </GroupBody>
        <GroupName>Font</GroupName>
      </Group>
      <Group $w={259}>
        <GroupBody>
          <AlignGrid>
            <AlignCell><Lines w={[16, 12, 16]} /></AlignCell>
            <AlignCell><Lines w={[16, 12, 16]} a="c" /></AlignCell>
            <AlignCell $on><Lines w={[16, 12, 16]} a="c" /></AlignCell>
            <AlignCell><Lines w={[16, 10, 14]} /></AlignCell>
            <AlignCell><Lines w={[16, 10, 14]} a="c" /></AlignCell>
            <AlignCell><Lines w={[16, 10, 14]} a="r" /></AlignCell>
            <AlignCell><Lines w={[16, 9, 16]} /></AlignCell>
            <AlignCell><Lines w={[16, 9, 16]} a="r" /></AlignCell>
            <AlignCell>
              <svg width="24" height="18" viewBox="0 0 24 18" fill="none" stroke="#3d87c9" strokeWidth="1.3">
                <path d="M2 12L10 2M7 16L14 7M14 7v8" /><path d="M14 11l3 3 3-3" stroke="#555" transform="translate(1 -2)" />
              </svg>
            </AlignCell>
          </AlignGrid>
          <SmallStack $top={11} $left={19}>
            <SmallBtn><WrapIcon /><span>Wrap Text</span></SmallBtn>
            <SmallBtn style={{ marginTop: 10 }}><MergeIcon /><span>Merge &amp; Center</span><Caret /></SmallBtn>
          </SmallStack>
        </GroupBody>
        <GroupName>Alignment</GroupName>
      </Group>
      <Group $w={167}>
        <GroupBody $pad={10}>
          <StackCol $top={13} $left={0} $gap={6}>
            <Combo><ComboPart $w={144}>General<Caret /></ComboPart></Combo>
            <ComboRow>
              <NumGlyph $w={26}>$</NumGlyph><Caret />
              <NumGlyph $w={32}>%</NumGlyph>
              <NumGlyph $w={22} style={{ fontWeight: 700 }}>,</NumGlyph>
              <svg width="22" height="22" viewBox="0 0 22 22" style={{ marginLeft: 2 }}>
                <text x="9" y="9" fontSize="10" fill="#555" fontFamily="Open Sans">0</text>
                <text x="3" y="20" fontSize="10" fill="#555" fontFamily="Open Sans">.00</text>
                <path d="M7 6H1M3 3L0 6l3 3" stroke="#3d87c9" fill="none" />
              </svg>
              <svg width="22" height="22" viewBox="0 0 22 22" style={{ marginLeft: 5 }}>
                <text x="5" y="9" fontSize="10" fill="#555" fontFamily="Open Sans">.00</text>
                <text x="12" y="20" fontSize="10" fill="#555" fontFamily="Open Sans">.0</text>
                <path d="M1 16h8M7 13l3 3-3 3" stroke="#3d87c9" fill="none" />
              </svg>
            </ComboRow>
          </StackCol>
        </GroupBody>
        <GroupName>Number</GroupName>
      </Group>
      <Group $w={220}>
        <GroupBody $pad={14}>
          <BigBtn $w={74}><CondIcon /><TwoLine a="Conditional" b="Formatting" /></BigBtn>
          <BigBtn $w={74}><TableIcon /><TwoLine a="Format As" b="Table" /></BigBtn>
          <BigBtn $w={44}><CellStyleIcon /><TwoLine a="Cell" b="Styles" /></BigBtn>
        </GroupBody>
        <GroupName>Styles</GroupName>
      </Group>
      <Group $w={156}>
        <GroupBody $pad={10}>
          <BigBtn $w={44} $gap={8}><InsertIcon /><span>Insert</span><Caret /></BigBtn>
          <BigBtn $w={44} $gap={8}><DeleteIcon /><span>Delete</span><Caret /></BigBtn>
          <BigBtn $w={50} $top={0} $gap={6}><FormatIcon /><span>Format</span><Caret /></BigBtn>
        </GroupBody>
        <GroupName>Cells</GroupName>
      </Group>
      <Group $w={223}>
        <GroupBody $pad={15}>
          <SmallStack $top={3}>
            <SmallBtn><Sigma />AutoSum<Caret /></SmallBtn>
            <SmallBtn style={{ marginTop: 2 }}><Eraser />Clear<Caret /></SmallBtn>
          </SmallStack>
          <BigBtn $w={51} $top={3} $gap={4} style={{ marginLeft: 13 }}><SortIcon /><span>Sort &amp;</span><CaretLine>Filter<Caret /></CaretLine></BigBtn>
          <BigBtn $w={51} $top={3} $gap={4}><FindIcon /><span>Find &amp;</span><CaretLine>Select<Caret /></CaretLine></BigBtn>
        </GroupBody>
        <GroupName>Editing</GroupName>
      </Group>
      <Group $w={70}>
        <GroupBody>
          <BigBtn $w={70} $top={3} $gap={3}><AnalyzeIcon /><span>Analyze</span><span>Data</span></BigBtn>
        </GroupBody>
        <GroupName>Analysis</GroupName>
      </Group>
    </Groups>
  </Ribbon>
);

const Formula = () => (
  <FormulaBar>
    <NameBox>A13<Caret /></NameBox>
    <FxBox><X size={18} strokeWidth={1.3} /><Check size={18} strokeWidth={1.3} /><i>fx</i></FxBox>
    <FormulaInput />
  </FormulaBar>
);

const Grid = () => (
  <Sheet>
    <Corner><svg width="17" height="16" viewBox="0 0 17 16"><path d="M17 0v16H0z" fill="#c6c6c6" /></svg></Corner>
    {COLS.map((c) => <ColHead key={c} $merge={c === "D"}>{c}</ColHead>)}
    {ROWS.map((row, i) => <SheetRow key={i} row={row} n={i + 1} />)}
  </Sheet>
);

export default function App() {
  return (
    <Page>
      <Global />
      <Watchlist />
      <Main>
        <Browser />
        <Title />
        <RibbonBar />
        <Formula />
        <Grid />
      </Main>
      <Cursor width="16" height="22" viewBox="0 0 16 22">
        <path d="M1 1v16l4-4 3 7 3-1-3-7h5z" fill="#fff" stroke="#333" strokeWidth="1.2" />
      </Cursor>
      <PageBadge />
    </Page>
  );
}
